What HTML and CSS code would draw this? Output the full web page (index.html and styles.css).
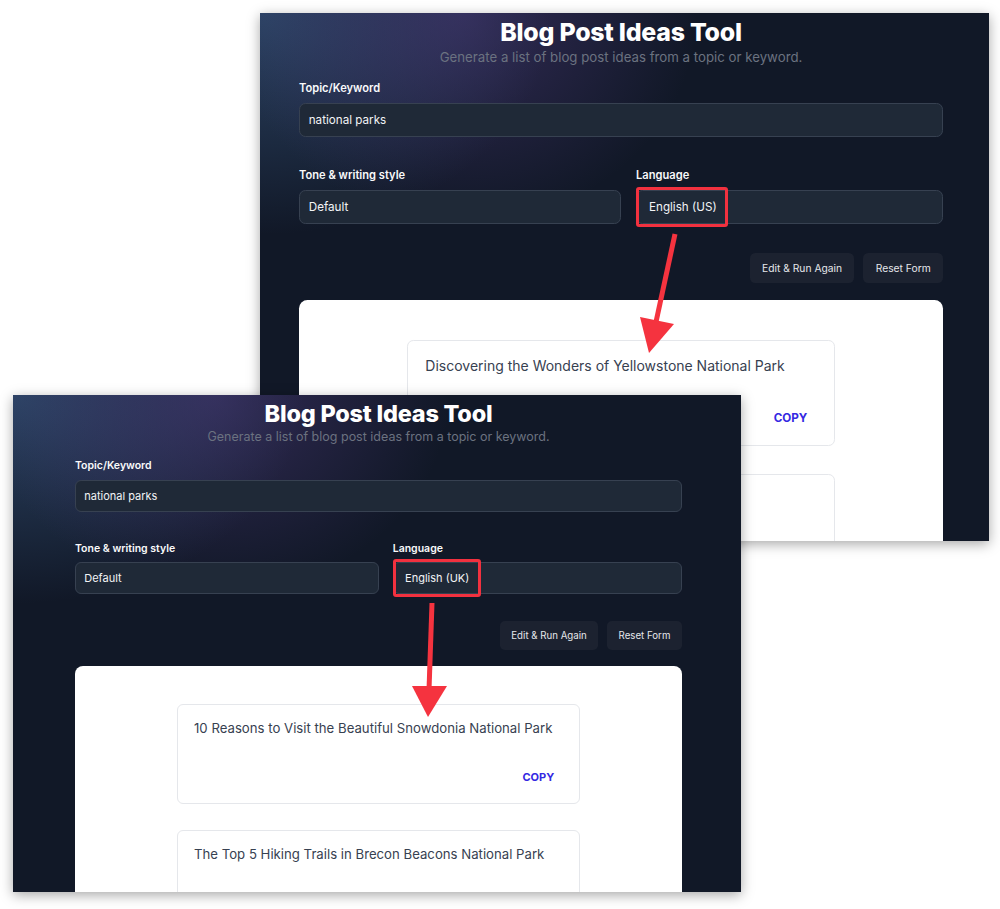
FILE: index.html
```html
<!DOCTYPE html>
<html lang="en">
<head>
    <meta charset="UTF-8">
    <meta name="viewport" content="width=device-width, initial-scale=1.0">
    <title>Blog Post Ideas Tool - US vs UK</title>
    <link rel="stylesheet" href="styles.css">
</head>
<body>
    <div class="canvas">

        <!-- US screenshot -->
        <div class="window window-us">
            <div class="app">
                <h1>Blog Post Ideas Tool</h1>
                <p class="subtitle">Generate a list of blog post ideas from a topic or keyword.</p>

                <label class="label">Topic/Keyword</label>
                <div class="field">national parks</div>

                <div class="row">
                    <div>
                        <label class="label">Tone &amp; writing style</label>
                        <div class="field">Default</div>
                    </div>
                    <div>
                        <label class="label">Language</label>
                        <div class="field field-marked"><span class="marked">English (US)</span></div>
                    </div>
                </div>

                <div class="actions">
                    <button class="btn">Edit &amp; Run Again</button>
                    <button class="btn">Reset Form</button>
                </div>

                <div class="results">
                    <div class="idea">
                        <p>Discovering the Wonders of Yellowstone National Park</p>
                        <span class="copy">Copy</span>
                    </div>
                    <div class="idea">
                        <p>&nbsp;</p>
                    </div>
                </div>
            </div>
        </div>

        <!-- UK screenshot -->
        <div class="window window-uk">
            <div class="app">
                <h1>Blog Post Ideas Tool</h1>
                <p class="subtitle">Generate a list of blog post ideas from a topic or keyword.</p>

                <label class="label">Topic/Keyword</label>
                <div class="field">national parks</div>

                <div class="row">
                    <div>
                        <label class="label">Tone &amp; writing style</label>
                        <div class="field">Default</div>
                    </div>
                    <div>
                        <label class="label">Language</label>
                        <div class="field field-marked"><span class="marked">English (UK)</span></div>
                    </div>
                </div>

                <div class="actions">
                    <button class="btn">Edit &amp; Run Again</button>
                    <button class="btn">Reset Form</button>
                </div>

                <div class="results">
                    <div class="idea">
                        <p>10 Reasons to Visit the Beautiful Snowdonia National Park</p>
                        <span class="copy">Copy</span>
                    </div>
                    <div class="idea">
                        <p>The Top 5 Hiking Trails in Brecon Beacons National Park</p>
                    </div>
                </div>
            </div>
        </div>

        <!-- arrows drawn over both screenshots -->
        <svg class="arrows" width="1000" height="909" viewBox="0 0 1000 909">
            <line x1="675" y1="234" x2="656" y2="322" stroke="#f5333f" stroke-width="5"/>
            <polygon points="640,317 674,324 649,353" fill="#f5333f"/>
            <line x1="432" y1="603" x2="429" y2="690" stroke="#f5333f" stroke-width="5"/>
            <polygon points="412,686 447,686 428,717" fill="#f5333f"/>
        </svg>
    </div>
</body>
</html>
```

FILE: styles.css
```css
body {
    margin: 0;
    background: #fff;
    font-family: Inter, "Noto Sans", Arial, sans-serif;
}
.canvas {
    position: relative;
    width: 1000px;
    height: 909px;
    overflow: hidden;
    background: #fff;
}

/* each screenshot sits on the canvas like a window */
.window {
    position: absolute;
    overflow: hidden;
    background-color: #111827;
    background-image:
        radial-gradient(ellipse 32% 40% at 28% 0%, rgba(88, 64, 140, 0.45), transparent),
        radial-gradient(ellipse 40% 42% at 0% 0%, rgba(52, 82, 120, 0.75), transparent);
    box-shadow: 0 3px 12px rgba(0, 0, 0, 0.35);
    font-size: 10px;
}
.window-us {
    left: 260px;
    top: 13px;
    width: 729px;
    height: 528px;
    font-size: 10.6px;
}
.window-us .app {
    padding: 0 46px 0 39px;
}
.window-uk {
    left: 13px;
    top: 395px;
    width: 728px;
    height: 497px;
}
.window-uk .app {
    padding: 0 59px 0 62px;
}

.app {
    color: #f3f4f6;
}
.app h1 {
    margin: 0;
    padding-top: .22em;
    font-size: 2.35em;
    line-height: 1.18;
    font-weight: 800;
    text-align: center;
    color: #fff;
    letter-spacing: -0.01em;
}
.subtitle {
    margin: .05em 0 0;
    font-size: 1.25em;
    line-height: 1.28;
    text-align: center;
    color: #6b7280;
}
.label {
    display: block;
    margin-top: 1.4em;
    font-size: 1.05em;
    line-height: 1.27;
    font-weight: 600;
    color: #f9fafb;
}
.field {
    display: flex;
    align-items: center;
    box-sizing: border-box;
    height: 2.95em;
    margin-top: .64em;
    padding-left: .75em;
    background: #1f2937;
    border: 1px solid #374151;
    border-radius: .55em;
    font-size: 1.1em;
    color: #f3f4f6;
}
.row {
    display: grid;
    grid-template-columns: 1.05fr 1fr;
    gap: 1.4em;
    margin-top: 1.5em;
}
.field-marked {
    padding-left: 0;
}
.marked {
    display: flex;
    align-items: center;
    box-sizing: border-box;
    height: calc(100% + 8px);
    margin: -4px 0 -3px -1px;
    padding: 0 .75em 0 .85em;
    border: 3px solid #f2313f;
    border-radius: 3px;
}
.actions {
    display: flex;
    justify-content: flex-end;
    gap: .85em;
    margin-top: 2.7em;
}
.btn {
    height: 2.9em;
    padding: 0 1.2em;
    border: none;
    border-radius: .5em;
    background: #1c2230;
    color: #e5e7eb;
    font-family: inherit;
    font-size: .97em;
    cursor: pointer;
}
.results {
    margin-top: 1.6em;
    padding: 3.8em 0 2em;
    background: #fff;
    border-radius: .8em;
}
.idea {
    box-sizing: border-box;
    width: 40.3em;
    min-height: 9.8em;
    margin: 0 auto 2.6em;
    padding: 1.4em 1.6em 1.8em;
    border: 1px solid #e5e7eb;
    border-radius: .6em;
    display: flex;
    flex-direction: column;
}
.idea p {
    margin: 0;
    font-size: 1.32em;
    line-height: 1.45;
    color: #374151;
}
.copy {
    align-self: flex-end;
    margin: 3em .8em 0 0;
    font-size: 1.1em;
    line-height: 1.27;
    font-weight: 700;
    text-transform: uppercase;
    color: #3428e2;
}

.arrows {
    position: absolute;
    left: 0;
    top: 0;
    pointer-events: none;
}
```
